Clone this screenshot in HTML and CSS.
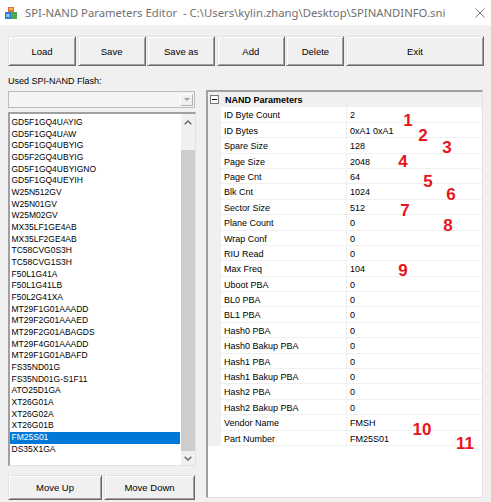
FILE: index.html
```html
<!DOCTYPE html>
<html lang="en">
<head>
    <meta charset="UTF-8">
    <title>SPI-NAND Parameters Editor</title>
    <link rel="stylesheet" href="styles.css">
</head>
<body>
<div class="window">
    <div class="titlebar">
        <svg class="app-icon" viewBox="0 0 12 12">
            <rect x="3" y="0" width="6" height="5" fill="#e2733a"/>
            <rect x="4.5" y="1" width="3" height="2" fill="#f6c244"/>
            <rect x="0" y="5" width="6" height="7" fill="#2f7fd0"/>
            <rect x="6" y="5" width="6" height="7" fill="#4aa852"/>
            <rect x="1.5" y="7" width="3" height="3" fill="#9cc8f0"/>
        </svg>
        <span class="title">SPI-NAND Parameters Editor  - C:\Users\kylin.zhang\Desktop\SPINANDINFO.sni</span>
        <svg class="close" viewBox="0 0 10 10">
            <path d="M0.5 0.5 L9.5 9.5 M9.5 0.5 L0.5 9.5" stroke="#777" stroke-width="1" fill="none"/>
        </svg>
    </div>

    <div class="toolbar">
        <button class="btn btn-load">Load</button>
        <button class="btn btn-save">Save</button>
        <button class="btn btn-saveas">Save as</button>
        <button class="btn btn-add">Add</button>
        <button class="btn btn-delete">Delete</button>
        <button class="btn btn-exit">Exit</button>
    </div>

    <div class="main">
        <div class="left">
            <div class="label">Used SPI-NAND Flash:</div>
            <div class="combo">
                <span class="combo-drop">
                    <svg viewBox="0 0 6 3" width="6" height="3"><path d="M0 0 L6 0 L3 3 Z" fill="#a0a0a0"/></svg>
                </span>
            </div>
            <div class="listbox">
                <ul class="items">
                    <li>GD5F1GQ4UAYIG</li>
                    <li>GD5F1GQ4UAW</li>
                    <li>GD5F1GQ4UBYIG</li>
                    <li>GD5F2GQ4UBYIG</li>
                    <li>GD5F1GQ4UBYIGNO</li>
                    <li>GD5F1GQ4UEYIH</li>
                    <li>W25N512GV</li>
                    <li>W25N01GV</li>
                    <li>W25M02GV</li>
                    <li>MX35LF1GE4AB</li>
                    <li>MX35LF2GE4AB</li>
                    <li>TC58CVG0S3H</li>
                    <li>TC58CVG1S3H</li>
                    <li>F50L1G41A</li>
                    <li>F50L1G41LB</li>
                    <li>F50L2G41XA</li>
                    <li>MT29F1G01AAADD</li>
                    <li>MT29F2G01AAAED</li>
                    <li>MT29F2G01ABAGDS</li>
                    <li>MT29F4G01AAADD</li>
                    <li>MT29F1G01ABAFD</li>
                    <li>FS35ND01G</li>
                    <li>FS35ND01G-S1F11</li>
                    <li>ATO25D1GA</li>
                    <li>XT26G01A</li>
                    <li>XT26G02A</li>
                    <li>XT26G01B</li>
                    <li class="selected">FM25S01</li>
                    <li>DS35X1GA</li>
                </ul>
                <div class="vscroll">
                    <div class="arrow arrow-up">
                        <svg viewBox="0 0 8 5" width="8" height="5"><path d="M0.7 4.3 L4 1 L7.3 4.3" stroke="#606060" stroke-width="1.3" fill="none"/></svg>
                    </div>
                    <div class="track-gap"></div>
                    <div class="thumb"></div>
                    <div class="arrow arrow-down">
                        <svg viewBox="0 0 8 5" width="8" height="5"><path d="M0.7 0.7 L4 4 L7.3 0.7" stroke="#606060" stroke-width="1.3" fill="none"/></svg>
                    </div>
                </div>
            </div>
            <div class="move-buttons">
                <button class="btn btn-up">Move Up</button>
                <button class="btn btn-down">Move Down</button>
            </div>
        </div>

        <div class="propgrid">
            <div class="category">
                <svg class="toggle" viewBox="0 0 9 9" width="9" height="9">
                    <rect x="0.5" y="0.5" width="8" height="8" fill="#fff" stroke="#7a7a7a"/>
                    <path d="M2 4.5 H7" stroke="#000" stroke-width="1"/>
                </svg>
                <span>NAND Parameters</span>
            </div>
            <div class="prop"><span class="gutter"></span><span class="name">ID Byte Count</span><span class="value">2</span></div>
            <div class="prop"><span class="gutter"></span><span class="name">ID Bytes</span><span class="value">0xA1 0xA1</span></div>
            <div class="prop"><span class="gutter"></span><span class="name">Spare Size</span><span class="value">128</span></div>
            <div class="prop"><span class="gutter"></span><span class="name">Page Size</span><span class="value">2048</span></div>
            <div class="prop"><span class="gutter"></span><span class="name">Page Cnt</span><span class="value">64</span></div>
            <div class="prop"><span class="gutter"></span><span class="name">Blk Cnt</span><span class="value">1024</span></div>
            <div class="prop"><span class="gutter"></span><span class="name">Sector Size</span><span class="value">512</span></div>
            <div class="prop"><span class="gutter"></span><span class="name">Plane Count</span><span class="value">0</span></div>
            <div class="prop"><span class="gutter"></span><span class="name">Wrap Conf</span><span class="value">0</span></div>
            <div class="prop"><span class="gutter"></span><span class="name">RIU Read</span><span class="value">0</span></div>
            <div class="prop"><span class="gutter"></span><span class="name">Max Freq</span><span class="value">104</span></div>
            <div class="prop"><span class="gutter"></span><span class="name">Uboot PBA</span><span class="value">0</span></div>
            <div class="prop"><span class="gutter"></span><span class="name">BL0 PBA</span><span class="value">0</span></div>
            <div class="prop"><span class="gutter"></span><span class="name">BL1 PBA</span><span class="value">0</span></div>
            <div class="prop"><span class="gutter"></span><span class="name">Hash0 PBA</span><span class="value">0</span></div>
            <div class="prop"><span class="gutter"></span><span class="name">Hash0 Bakup PBA</span><span class="value">0</span></div>
            <div class="prop"><span class="gutter"></span><span class="name">Hash1 PBA</span><span class="value">0</span></div>
            <div class="prop"><span class="gutter"></span><span class="name">Hash1 Bakup PBA</span><span class="value">0</span></div>
            <div class="prop"><span class="gutter"></span><span class="name">Hash2 PBA</span><span class="value">0</span></div>
            <div class="prop"><span class="gutter"></span><span class="name">Hash2 Bakup PBA</span><span class="value">0</span></div>
            <div class="prop"><span class="gutter"></span><span class="name">Vendor Name</span><span class="value">FMSH</span></div>
            <div class="prop"><span class="gutter"></span><span class="name">Part Number</span><span class="value">FM25S01</span></div>
        </div>
    </div>

    <!-- red annotation numbers drawn over the grid -->
    <span class="mark m1">1</span>
    <span class="mark m2">2</span>
    <span class="mark m3">3</span>
    <span class="mark m4">4</span>
    <span class="mark m5">5</span>
    <span class="mark m6">6</span>
    <span class="mark m7">7</span>
    <span class="mark m8">8</span>
    <span class="mark m9">9</span>
    <span class="mark m10">10</span>
    <span class="mark m11">11</span>
</div>
</body>
</html>
```

FILE: styles.css
```css
* {
    box-sizing: border-box;
}

body {
    margin: 0;
    background-color: #f0f0f0;
    font-family: "Liberation Sans", Arial, sans-serif;
    color: #000;
}

.window {
    position: relative;
    width: 491px;
    height: 502px;
    overflow: hidden;
}

/* title bar */
.titlebar {
    height: 25px;
    background-color: #fff;
    display: flex;
    align-items: center;
    padding-left: 5px;
}

.app-icon {
    width: 12px;
    height: 12px;
    flex: none;
}

.title {
    flex: 1;
    margin-left: 8px;
    font-family: "Noto Sans", sans-serif;
    font-size: 11.3px;
    color: #707070;
    white-space: pre;
}

.close {
    width: 10px;
    height: 10px;
    margin-right: 6px;
}

/* buttons */
.btn {
    height: 30px;
    padding: 0;
    background-color: #f0f0f0;
    border: 1px solid;
    border-color: #e3e3e3 #696969 #696969 #e3e3e3;
    box-shadow: inset 1px 1px #fff, inset -1px -1px #a0a0a0;
    font-family: "Liberation Sans", Arial, sans-serif;
    font-size: 9.5px;
    color: #000;
}

.toolbar {
    display: flex;
    gap: 1.6px;
    padding: 11px 0 0 8px;
}

.btn-load, .btn-save, .btn-saveas, .btn-add {
    width: 68px;
}

.btn-delete {
    width: 58px;
}

.btn-exit {
    width: 138px;
}

/* main area */
.main {
    display: flex;
    gap: 10px;
    padding: 6px 8px 0 8px;
}

.left {
    width: 188px;
}

.label {
    height: 19px;
    line-height: 18px;
    font-size: 9px;
}

.combo {
    width: 187px;
    height: 17px;
    border: 1px solid #bcbcbc;
    background-color: #f4f4f4;
    display: flex;
    justify-content: flex-end;
    align-items: center;
    padding-right: 1px;
    margin-bottom: 4px;
}

.combo-drop {
    width: 13px;
    height: 12px;
    border: 1px solid;
    border-color: #fff #b0b0b0 #b0b0b0 #fff;
    background-color: #f0f0f0;
    display: flex;
    justify-content: center;
    align-items: center;
}

.listbox {
    height: 354px;
    display: flex;
    background-color: #fff;
    border-style: solid;
    border-width: 2px 1px 1px 2px;
    border-color: #a0a0a0 #e3e3e3 #e3e3e3 #a0a0a0;
}

.items {
    flex: 1;
    list-style: none;
    margin: 0;
    padding: 3px 1px 0 0;
    font-size: 8.5px;
    line-height: 11.67px;
}

.items li {
    padding-left: 1.5px;
    white-space: nowrap;
}

.items li.selected {
    background-color: #0078d7;
    color: #fff;
}

.vscroll {
    width: 14px;
    display: flex;
    flex-direction: column;
    background-color: #f0f0f0;
}

.arrow {
    display: flex;
    justify-content: center;
    align-items: center;
}

.arrow-up {
    height: 17px;
}

.track-gap {
    height: 19px;
}

.thumb {
    height: 301px;
    background-color: #cdcdcd;
}

.arrow-down {
    flex: 1;
}

.move-buttons {
    display: flex;
    gap: 2px;
    margin-top: 9px;
}

.btn-up {
    width: 94px;
    height: 25px;
}

.btn-down {
    width: 91px;
    height: 25px;
}

/* property grid */
.propgrid {
    width: 277px;
    height: 408px;
    margin-top: 18px;
    background-color: #fff;
    border-style: solid;
    border-width: 2px 1px 1px 2px;
    border-color: #a0a0a0 #e3e3e3 #e3e3e3 #a0a0a0;
    font-size: 9px;
}

.category {
    height: 15.4px;
    display: flex;
    align-items: center;
    background-color: #f0f0f0;
    font-weight: bold;
}

.toggle {
    margin-left: 2px;
    margin-right: 6px;
    flex: none;
}

.prop {
    height: 15.4px;
    display: flex;
    line-height: 16px;
}

.gutter {
    width: 13px;
    background-color: #f0f0f0;
}

.name {
    width: 126px;
    padding-left: 3px;
    border-right: 1px solid #f0f0f0;
    border-bottom: 1px solid #f0f0f0;
    white-space: nowrap;
}

.value {
    flex: 1;
    padding-left: 3px;
    border-bottom: 1px solid #f0f0f0;
    white-space: nowrap;
}

/* annotation numbers */
.mark {
    position: absolute;
    transform: translate(-50%, -50%);
    font-family: "Liberation Sans", Arial, sans-serif;
    font-weight: bold;
    font-size: 17px;
    line-height: 1;
    color: #e8141c;
}

.m1 { left: 408px; top: 120px; }
.m2 { left: 423px; top: 135px; }
.m3 { left: 447px; top: 147px; }
.m4 { left: 403px; top: 161px; }
.m5 { left: 428px; top: 181px; }
.m6 { left: 451px; top: 194px; }
.m7 { left: 405px; top: 210px; }
.m8 { left: 448px; top: 225px; }
.m9 { left: 403px; top: 270px; }
.m10 { left: 422px; top: 429px; }
.m11 { left: 465px; top: 443px; }
```
